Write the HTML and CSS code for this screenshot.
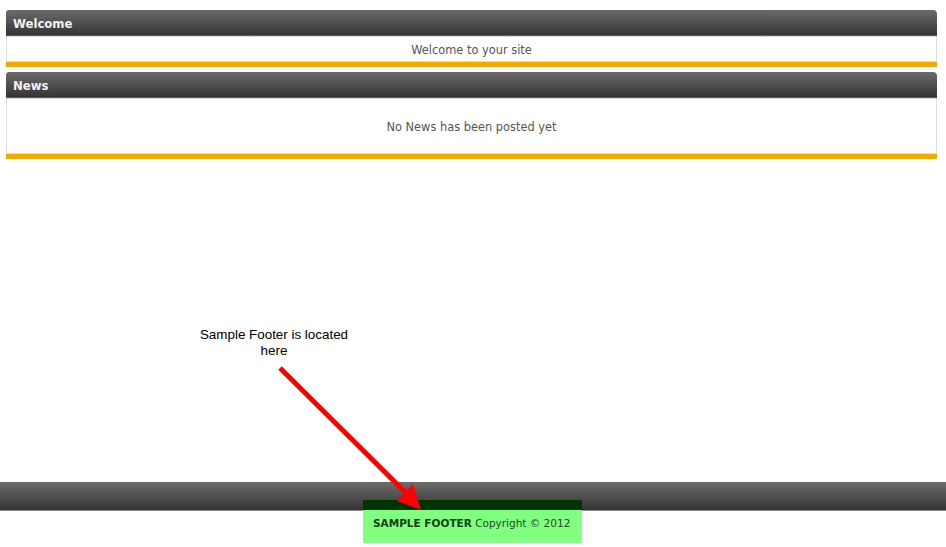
FILE: index.html
```html
<!DOCTYPE html>
<html>
<head>
<meta charset="utf-8">
<title>Sample</title>
<link rel="stylesheet" href="styles.css">
</head>
<body>
<div class="page">
  <main class="content">
    <section class="box">
      <h2 class="box-head">Welcome</h2>
      <div class="box-body small">Welcome to your site</div>
      <div class="box-foot"></div>
    </section>
    <section class="box">
      <h2 class="box-head">News</h2>
      <div class="box-body tall">No News has been posted yet</div>
      <div class="box-foot"></div>
    </section>
  </main>
  <footer class="footer">
    <div class="footer-bar"></div>
    <div class="footer-area"></div>
  </footer>
</div>
<div class="note">Sample Footer is located<br>here</div>
<div class="highlight"><div class="highlight-top"></div><p class="highlight-text"><b>SAMPLE FOOTER</b> Copyright © 2012</p></div>
<svg class="arrow" width="946" height="547" viewBox="0 0 946 547">
  <line x1="280" y1="368" x2="410" y2="497" stroke="#ff0000" stroke-width="5"/>
  <polygon points="421,510 413,484 397,501" fill="#ff0000"/>
</svg>
</body>
</html>
```
FILE: styles.css
```css
html, body {
  margin: 0;
  padding: 0;
  background: #fff;
}
body {
  font-family: "DejaVu Sans", Verdana, sans-serif;
  font-size: 11.4px;
  color: #555;
}
.page {
  display: flex;
  flex-direction: column;
  min-height: 547px;
}
.content {
  flex: 1;
  padding: 10px 9px 0 6px;
}
.box {
  margin-bottom: 5px;
}
.box-head {
  margin: 0;
  height: 25px;
  line-height: 28px;
  padding-left: 7px;
  font-size: 11.7px;
  font-weight: bold;
  color: #f2f2f2;
  background: linear-gradient(#6c6c6c, #343434);
  border-bottom: 1px solid #5a5a5a;
  border-radius: 3px 4px 0 0;
}
.box-body {
  border: 1px solid #dcdcdc;
  text-align: center;
  color: #555;
}
.box-body.small {
  height: 24px;
  line-height: 26px;
}
.box-body.tall {
  height: 54px;
  line-height: 57px;
}
.box-foot {
  height: 5px;
  background: #f7a800;
}
.footer-bar {
  height: 28px;
  background: linear-gradient(#6c6c6c, #343434);
  border-bottom: 1px solid #888;
}
.footer-area {
  height: 36px;
}
.note {
  position: absolute;
  left: 174px;
  top: 327px;
  width: 200px;
  text-align: center;
  font-family: "Liberation Sans", Arial, sans-serif;
  font-size: 13.4px;
  line-height: 16px;
  color: #000;
}
.highlight {
  position: absolute;
  left: 363px;
  top: 500px;
  width: 219px;
  height: 43px;
  background: #80ff80;
}
.highlight-top {
  height: 10px;
  background: #003300;
}
.highlight-text {
  margin: 0;
  padding-left: 10px;
  line-height: 27px;
  font-size: 10.5px;
  color: #1f4f1f;
}
.highlight-text b {
  color: #143d14;
}
.arrow {
  position: absolute;
  left: 0;
  top: 0;
}
```
